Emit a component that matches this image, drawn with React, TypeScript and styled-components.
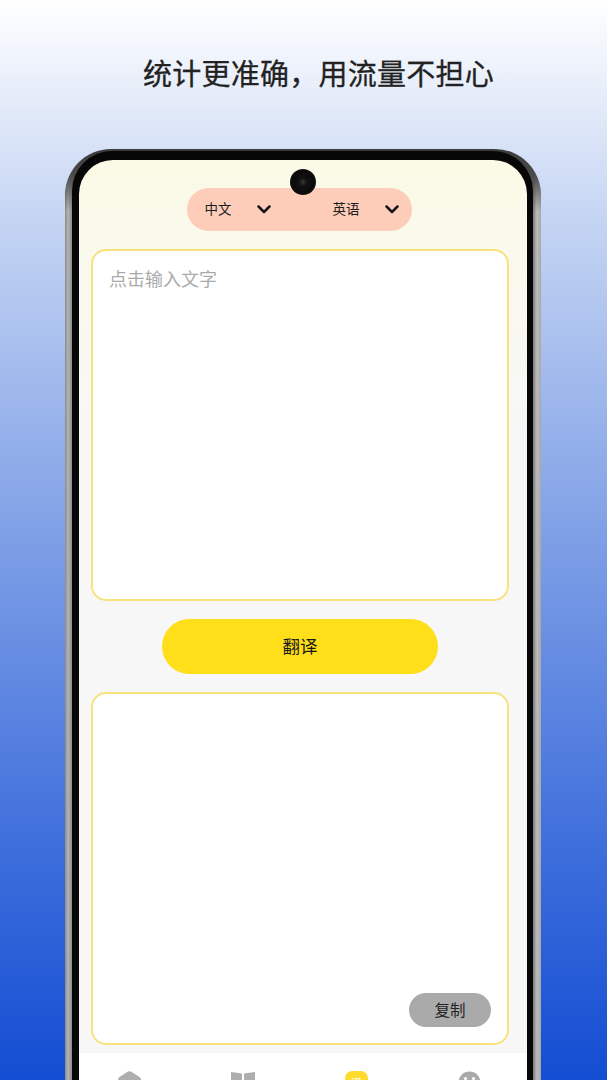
import React from "react";
import styled, { createGlobalStyle } from "styled-components";

const GlobalStyle = createGlobalStyle`
  html, body {
    margin: 0;
    padding: 0;
  }
  body {
    width: 607px;
    height: 1080px;
    overflow: hidden;
    font-family: "Noto Sans CJK SC", "Noto Sans", sans-serif;
  }
`;

const Page = styled.div`
  width: 607px;
  height: 1080px;
  overflow: hidden;
  box-sizing: border-box;
  padding: 149px 66px 0 65px;
  background: linear-gradient(180deg, #ffffff 0%, #c5d5f3 20%, #7e9fe6 50%, #3f6fdc 78%, #134dd2 100%);
`;

const Title = styled.h1`
  position: absolute;
  top: 51px;
  left: 143px;
  margin: 0;
  font-size: 29px;
  letter-spacing: 0.25px;
  line-height: 42px;
  font-weight: 400;
  color: #222;
  white-space: nowrap;
  -webkit-text-stroke: 0.3px #222;
`;

const PhoneFrame = styled.div`
  height: 1000px;
  box-sizing: border-box;
  padding: 2px 8px 0 7px;
  border-radius: 46px 46px 0 0;
  background:
    linear-gradient(180deg, #3c3c3c 0, #4a4a4a 26px, rgba(74, 74, 74, 0) 62px),
    linear-gradient(90deg, #8a8a8a 0, #b4b4b4 3px, #8c8c8c 7px, #7c7c7c 468px, #bcbcbc 472px, #a8a8a8 476px);
`;

const PhoneBezel = styled.div`
  height: 100%;
  box-sizing: border-box;
  padding: 9px 6px 0 7px;
  border-radius: 40px 40px 0 0;
  background: #070707;
`;

const Screen = styled.div`
  height: 100%;
  position: relative;
  overflow: hidden;
  border-radius: 34px 34px 0 0;
  background: linear-gradient(180deg, #fbfae6 0%, #f9f9ee 12%, #f7f7f7 28%);
  display: flex;
  flex-direction: column;
`;

const Camera = styled.div`
  position: absolute;
  top: 9px;
  left: 211px;
  width: 26px;
  height: 26px;
  border-radius: 50%;
  background: radial-gradient(circle, #3a3a3a 0%, #111 22%, #0a0a0a 60%, #2a2a2a 100%);
`;

const Content = styled.div`
  padding-right: 6px;
  display: flex;
  flex-direction: column;
  align-items: center;
`;

const LangPill = styled.div`
  margin-top: 28px;
  margin-right: 1px;
  width: 225px;
  height: 43px;
  border-radius: 22px;
  background: #fdcdb9;
  display: grid;
  grid-template-columns: 128px 97px;
`;

const LangOption = styled.div`
  display: flex;
  align-items: center;
  gap: 24px;
  padding: 0 0 3px 17.5px;
  font-size: 13.5px;
  color: #1c1c1c;
  svg {
    margin-top: 2px;
  }
`;

const Chevron = () => (
  <svg width="16" height="11" viewBox="0 0 16 11" fill="none">
    <path d="M2.5 2.5 L8 8 L13.5 2.5" stroke="#111" strokeWidth="2.5" strokeLinecap="round" strokeLinejoin="round" />
  </svg>
);

const TextCard = styled.div<{ $height: number }>`
  position: relative;
  margin-top: 18px;
  width: 418px;
  height: ${(props) => props.$height}px;
  box-sizing: border-box;
  border: 2px solid #f8e27c;
  border-radius: 15px;
  background: #fff;
  padding: 14px 16px;
`;

const Placeholder = styled.div`
  font-size: 18px;
  line-height: 26px;
  color: #aaaaaa;
`;

const TranslateButton = styled.button`
  margin-top: 18px;
  width: 276px;
  height: 55px;
  border: none;
  border-radius: 28px;
  background: #ffde1a;
  color: #1a1a1a;
  font-family: inherit;
  font-size: 17.5px;
  padding: 0 0 3px;
`;

const CopyButton = styled.button`
  position: absolute;
  right: 16px;
  bottom: 16px;
  width: 82px;
  height: 34px;
  border: none;
  border-radius: 17px;
  background: #aaaaaa;
  color: #222;
  font-family: inherit;
  font-size: 15.5px;
  padding: 0 0 3px;
`;

const TabBar = styled.nav`
  margin-top: 8px;
  flex: 1;
  background: #fff;
  display: grid;
  grid-template-columns: repeat(4, 113.5px);
  justify-content: center;
  padding: 18px 7px 0 0;
`;

const TabItem = styled.div`
  display: flex;
  justify-content: center;
`;

const YellowTab = styled.div`
  width: 23px;
  height: 24px;
  border-radius: 7px;
  background: #ffdb2e;
  color: #fff;
  font-size: 11px;
  line-height: 22px;
  text-align: center;
`;

const HomeIcon = () => (
  <svg width="23" height="28" viewBox="0 0 23 28">
    <path d="M10 0.6 Q11.5 -0.2 13 0.6 L21.5 6 Q23 7 23 9 V28 H0 V9 Q0 7 1.5 6 Z" fill="#aeaeae" />
  </svg>
);

const BookIcon = () => (
  <svg width="24" height="28" viewBox="0 0 24 28">
    <path d="M0 1 L11 2.5 V28 H0 Z M13 2.5 L24 1 V28 H13 Z" fill="#aeaeae" />
  </svg>
);

const FaceIcon = () => (
  <svg width="23" height="28" viewBox="0 0 23 28">
    <circle cx="11.5" cy="11.5" r="11" fill="#aaaaaa" />
    <circle cx="7.5" cy="7.5" r="1.6" fill="#fff" />
    <circle cx="15.5" cy="7.5" r="1.6" fill="#fff" />
  </svg>
);

export default function App() {
  return (
    <>
      <GlobalStyle />
      <Page>
        <Title>统计更准确，用流量不担心</Title>
        <PhoneFrame>
          <PhoneBezel>
            <Screen>
              <Camera />
              <Content>
                <LangPill>
                  <LangOption>
                    中文
                    <Chevron />
                  </LangOption>
                  <LangOption>
                    英语
                    <Chevron />
                  </LangOption>
                </LangPill>
                <TextCard $height={352}>
                  <Placeholder>点击输入文字</Placeholder>
                </TextCard>
                <TranslateButton>翻译</TranslateButton>
                <TextCard $height={353}>
                  <CopyButton>复制</CopyButton>
                </TextCard>
              </Content>
              <TabBar>
                <TabItem>
                  <HomeIcon />
                </TabItem>
                <TabItem>
                  <BookIcon />
                </TabItem>
                <TabItem>
                  <YellowTab>译</YellowTab>
                </TabItem>
                <TabItem>
                  <FaceIcon />
                </TabItem>
              </TabBar>
            </Screen>
          </PhoneBezel>
        </PhoneFrame>
      </Page>
    </>
  );
}
